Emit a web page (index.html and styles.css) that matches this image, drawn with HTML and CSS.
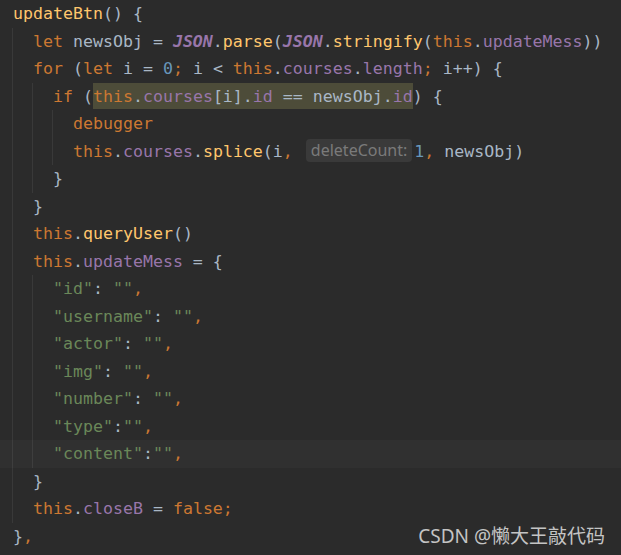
FILE: index.html
```html
<!DOCTYPE html>
<html lang="en">
  <head>
    <meta charset="UTF-8" />
    <meta name="viewport" content="width=device-width, initial-scale=1.0" />
    <title>updateBtn</title>
    <link rel="stylesheet" href="styles.css">
  </head>

  <body>
    <div class="code">
      <div class="ln"><span class="f">updateBtn</span>() {</div>
      <div class="blk">
        <div class="ln"><span class="k">let</span> newsObj = <span class="st">JSON</span>.<span class="f">parse</span>(<span class="st">JSON</span>.<span class="f">stringify</span>(<span class="k">this</span>.<span class="p">updateMess</span>))</div>
        <div class="ln"><span class="k">for</span> (<span class="k">let</span> i = <span class="n">0</span><span class="k">;</span> i &lt; <span class="k">this</span>.<span class="p">courses</span>.<span class="p">length</span><span class="k">;</span> i++) {</div>
        <div class="blk">
          <div class="ln"><span class="k">if</span> (<span class="hl"><span class="k">this</span>.<span class="p">courses</span>[i].<span class="p">id</span> == newsObj.<span class="p">id</span></span>) {</div>
          <div class="blk">
            <div class="ln"><span class="k">debugger</span></div>
            <div class="ln"><span class="k">this</span>.<span class="p">courses</span>.<span class="f">splice</span>(i<span class="k">,</span> <span class="hint">deleteCount:</span><span class="n">1</span><span class="k">,</span> newsObj)</div>
          </div>
          <div class="ln">}</div>
        </div>
        <div class="ln">}</div>
        <div class="ln"><span class="k">this</span>.<span class="f">queryUser</span>()</div>
        <div class="ln"><span class="k">this</span>.<span class="p">updateMess</span> = {</div>
        <div class="blk">
          <div class="ln"><span class="s">"id"</span>: <span class="s">""</span><span class="k">,</span></div>
          <div class="ln"><span class="s">"username"</span>: <span class="s">""</span><span class="k">,</span></div>
          <div class="ln"><span class="s">"actor"</span>: <span class="s">""</span><span class="k">,</span></div>
          <div class="ln"><span class="s">"img"</span>: <span class="s">""</span><span class="k">,</span></div>
          <div class="ln"><span class="s">"number"</span>: <span class="s">""</span><span class="k">,</span></div>
          <div class="ln"><span class="s">"type"</span>:<span class="s">""</span><span class="k">,</span></div>
          <div class="ln cur"><span class="s">"content"</span>:<span class="s">""</span><span class="k">,</span></div>
        </div>
        <div class="ln">}</div>
        <div class="ln"><span class="k">this</span>.<span class="p">closeB</span> = <span class="k">false;</span></div>
      </div>
      <div class="ln last">
        <span>}<span class="k">,</span></span>
        <span class="mark">CSDN @懒大王敲代码</span>
      </div>
    </div>
  </body>
</html>
```

FILE: styles.css
```css
* {
  margin: 0;
  padding: 0;
}

html,
body {
  background: #2b2b2b;
}
body {
  width: 621px;
  height: 555px;
  overflow: hidden;
}
.code {
  padding-left: 13px;
  color: #a9b7c6;
  font-family: "DejaVu Sans Mono", "Liberation Mono", monospace;
  font-size: 16.6px;
  line-height: 27.5px;
}
.ln {
  white-space: pre;
  height: 27.5px;
}
.blk {
  margin-left: -1px;
  padding-left: 20px;
  border-left: 1px solid #393939;
}
.cur {
  margin-left: -53px;
  padding-left: 53px;
  background: rgba(255, 255, 255, 0.028);
}

.k {
  color: #cc7832;
}
.f {
  color: #ffc66d;
}
.p {
  color: #9876aa;
}
.s {
  color: #6a8759;
}
.n {
  color: #6897bb;
}
.st {
  color: #9876aa;
  font-style: italic;
  font-weight: bold;
}
.hl {
  background: #4d4c39;
  padding: 3.5px 0;
}
.hint {
  display: inline-block;
  margin: 0 2px 0 3px;
  padding: 0 5px;
  height: 23px;
  line-height: 23px;
  border-radius: 4px;
  background: #3a3a3a;
  color: #7a7a7a;
  font-family: "Noto Sans", sans-serif;
  font-size: 16px;
  vertical-align: 1px;
}

.last {
  display: flex;
  justify-content: space-between;
  padding-right: 16px;
}
.mark {
  color: #c4c4c4;
  font-family: "Noto Sans", "Noto Sans CJK SC", sans-serif;
  font-size: 19px;
}
```
